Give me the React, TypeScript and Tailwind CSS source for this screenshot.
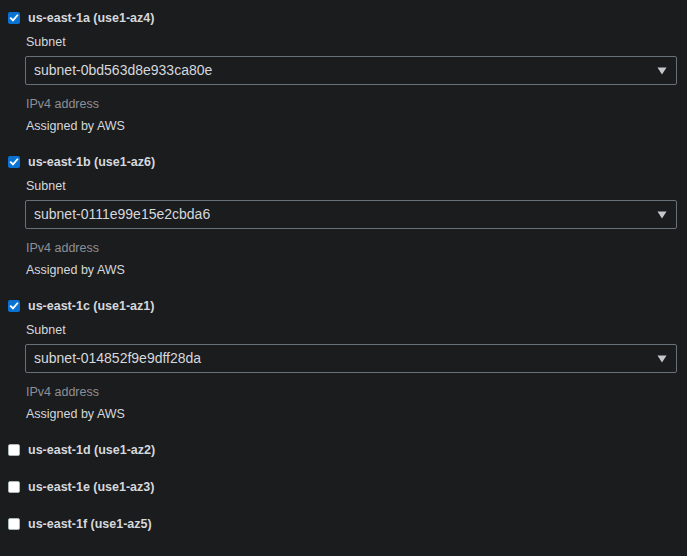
const zones = [
  { name: 'us-east-1a (use1-az4)', checked: true, subnet: 'subnet-0bd563d8e933ca80e' },
  { name: 'us-east-1b (use1-az6)', checked: true, subnet: 'subnet-0111e99e15e2cbda6' },
  { name: 'us-east-1c (use1-az1)', checked: true, subnet: 'subnet-014852f9e9dff28da' },
  { name: 'us-east-1d (use1-az2)', checked: false },
  { name: 'us-east-1e (use1-az3)', checked: false },
  { name: 'us-east-1f (use1-az5)', checked: false },
];

function Checkbox({ checked }: { checked: boolean }) {
  if (checked) {
    return (
      <span className="w-3 h-3 rounded-[2px] bg-[#0972d3] flex items-center justify-center shrink-0">
        <svg width="10" height="10" viewBox="0 0 10 10" fill="none">
          <path d="M1.8 5.2 L4 7.4 L8.3 2.4" stroke="white" strokeWidth="1.8" strokeLinecap="square" />
        </svg>
      </span>
    );
  }
  return <span className="w-3 h-3 rounded-[2px] bg-white border border-[#aab7b8] shrink-0" />;
}

export default function App() {
  return (
    <div
      className="w-[687px] h-[556px] bg-[#1b1c1e] text-[#d5d8dc] text-[12.5px] pl-2 pr-[10px] pt-2 overflow-hidden"
      style={{ fontFamily: '"Liberation Sans", Arial, sans-serif' }}
    >
      {zones.map((z) =>
        z.checked ? (
          <div key={z.name} className="h-[144px]">
            <label className="flex items-center gap-2 h-5">
              <Checkbox checked />
              <span className="font-bold">{z.name}</span>
            </label>
            <div className="pl-[17px] mt-1">
              <div className="h-5 leading-5 pl-px">Subnet</div>
              <div className="mt-1 h-[29px] border border-[#687078] rounded-[2px] flex items-center justify-between pl-2 pr-[9px] text-[14px]">
                <span>{z.subnet}</span>
                <svg width="10" height="8" viewBox="0 0 10 8">
                  <path d="M0.5 0.5 H9.5 L5 7.5 Z" fill="#c6c6cd" />
                </svg>
              </div>
              <div className="mt-[9px] h-5 leading-5 pl-px text-[#8d9096]">IPv4 address</div>
              <div className="mt-[2px] h-5 leading-5 pl-px">Assigned by AWS</div>
            </div>
          </div>
        ) : (
          <label key={z.name} className="flex items-center gap-2 h-5 mb-[17px]">
            <Checkbox checked={false} />
            <span className="font-bold">{z.name}</span>
          </label>
        )
      )}
    </div>
  );
}
